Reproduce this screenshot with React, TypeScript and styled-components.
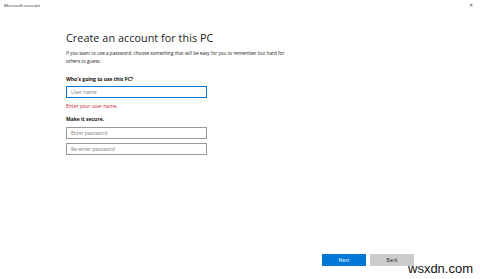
import { createGlobalStyle } from 'styled-components';
import styled from 'styled-components';

const GlobalStyle = createGlobalStyle`
  html, body {
    margin: 0;
    padding: 0;
    background: #ffffff;
  }
  body {
    font-family: 'Open Sans', 'Noto Sans', 'Liberation Sans', sans-serif;
    color: #000;
  }
  * {
    box-sizing: border-box;
  }
`;

const Window = styled.div`
  position: relative;
  width: 480px;
  height: 279px;
  display: flex;
  flex-direction: column;
  background: #fff;
  overflow: hidden;
`;

const TitleBar = styled.div`
  height: 10px;
  display: flex;
  align-items: center;
  justify-content: space-between;
  padding: 0 7px 0 4px;
`;

const TitleText = styled.span`
  font-size: 4.3px;
  color: #222;
`;

const CloseGlyph = styled.span`
  font-size: 5px;
  color: #444;
  line-height: 1;
`;

const Content = styled.main`
  flex: 1;
  display: flex;
  flex-direction: column;
  padding-left: 66px;
`;

const Heading = styled.h1`
  margin: 20px 0 0;
  font-size: 10.8px;
  line-height: 15px;
  font-weight: 400;
  color: #1a1a1a;
  letter-spacing: 0.05px;
`;

const Intro = styled.p`
  margin: 4px 0 0;
  width: 222px;
  font-size: 4.7px;
  line-height: 8px;
  color: #1a1a1a;
`;

const Label = styled.div<{ $gap: number }>`
  margin-top: ${({ $gap }) => $gap}px;
  font-size: 5px;
  line-height: 8px;
  font-weight: 700;
  color: #111;
`;

const Field = styled.input<{ $focused?: boolean; $gap: number }>`
  display: block;
  margin-top: ${({ $gap }) => $gap}px;
  width: 141px;
  height: 12px;
  padding: 0 4px;
  border: ${({ $focused }) => ($focused ? '1.5px solid #0078d7' : '1px solid #999')};
  border-radius: 0;
  font-family: inherit;
  font-size: 5px;
  outline: none;
  background: #fff;

  &::placeholder {
    color: #7a7a7a;
  }
`;

const ErrorText = styled.div`
  margin-top: 4px;
  font-size: 5px;
  line-height: 8px;
  color: #c4262e;
`;

const Footer = styled.footer`
  display: flex;
  justify-content: flex-end;
  gap: 4px;
  padding: 0 66px 13px 0;
`;

const Button = styled.button<{ $primary?: boolean }>`
  width: 44px;
  height: 12px;
  padding: 0;
  border: none;
  border-radius: 0;
  font-family: inherit;
  font-size: 5px;
  background: ${({ $primary }) => ($primary ? '#0078d7' : '#cccccc')};
  color: ${({ $primary }) => ($primary ? '#ffffff' : '#1a1a1a')};
`;

const Watermark = styled.span`
  position: absolute;
  left: 408px;
  top: 262px;
  font-family: 'Liberation Sans', Arial, sans-serif;
  font-size: 13px;
  line-height: 14px;
  color: #111;
`;

export default function App() {
  return (
    <>
      <GlobalStyle />
      <Window>
        <TitleBar>
          <TitleText>Microsoft account</TitleText>
          <CloseGlyph>✕</CloseGlyph>
        </TitleBar>
        <Content>
          <Heading>Create an account for this PC</Heading>
          <Intro>
            If you want to use a password, choose something that will be easy for you to remember but hard for
            others to guess.
          </Intro>
          <Label $gap={10}>Who's going to use this PC?</Label>
          <Field $focused $gap={3} placeholder="User name" />
          <ErrorText>Enter your user name.</ErrorText>
          <Label $gap={5}>Make it secure.</Label>
          <Field $gap={4} type="password" placeholder="Enter password" />
          <Field $gap={4} type="password" placeholder="Re-enter password" />
        </Content>
        <Footer>
          <Button $primary>Next</Button>
          <Button>Back</Button>
        </Footer>
        <Watermark>wsxdn.com</Watermark>
      </Window>
    </>
  );
}
